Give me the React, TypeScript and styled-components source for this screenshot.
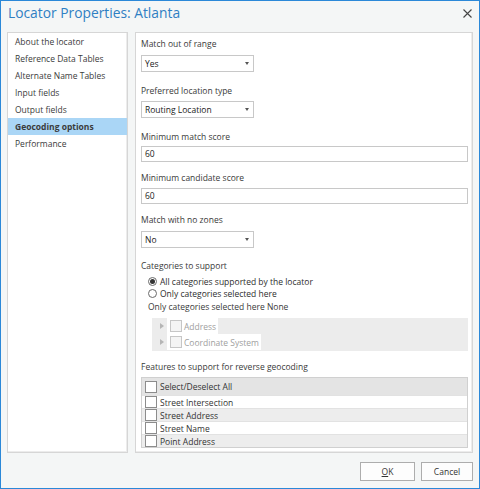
import React from 'react';
import styled, { createGlobalStyle } from 'styled-components';

const GlobalStyle = createGlobalStyle`
  html, body { margin: 0; padding: 0; background: #ffffff; }
  body { font-family: "Open Sans", "Noto Sans", sans-serif; }
  * { box-sizing: border-box; }
`;

const FONT = 8.5;

const Window = styled.div`
  width: 480px;
  height: 489px;
  border: 1px solid #2b88d8;
  background: #f4f6f6;
  display: flex;
  flex-direction: column;
  color: #333;
  font-size: ${FONT}px;
`;

const TitleBar = styled.div`
  height: 31px;
  display: flex;
  align-items: flex-start;
  justify-content: space-between;
  padding: 3px 5px 0 7px;
`;

const Title = styled.div`
  font-size: 13.8px;
  color: #2f7fc3;
  line-height: 18px;
`;

const CloseButton = styled.div`
  width: 14px;
  height: 14px;
  margin-top: 2px;
  display: flex;
  align-items: center;
  justify-content: center;
`;

const Body = styled.div`
  height: 421px;
  display: flex;
  gap: 7px;
  padding: 0 6px;
`;

const Panel = styled.div<{ $width?: number }>`
  ${p => (p.$width ? `width: ${p.$width}px;` : 'flex: 1;')}
  background: #ffffff;
  border: 1px solid #d6d6d6;
  box-shadow: inset -1px -1px 0 #ececec;
`;

const NavList = styled.div`
  padding-top: 0;
`;

const NavItem = styled.div<{ $active?: boolean }>`
  height: 17px;
  line-height: 17px;
  padding-left: 7px;
  color: #3b3b3b;
  font-weight: ${p => (p.$active ? 700 : 400)};
  background: ${p => (p.$active ? '#aad6f6' : 'transparent')};
  white-space: nowrap;
`;

const Content = styled.div`
  padding: 5px 4px 0 5px;
`;

const Field = styled.div<{ $gap: number }>`
  margin-bottom: ${p => p.$gap}px;
`;

const Label = styled.div<{ $gap: number }>`
  height: 12px;
  line-height: 12px;
  margin-bottom: ${p => p.$gap}px;
  color: #3a3a3a;
  white-space: nowrap;
`;

const Select = styled.div`
  width: 113px;
  height: 17px;
  border: 1px solid #c8c8c8;
  background: #fff;
  display: flex;
  align-items: center;
  justify-content: space-between;
  padding: 0 4px 0 3px;
  color: #222;
`;

const Caret = styled.span`
  width: 0;
  height: 0;
  border-left: 2px solid transparent;
  border-right: 2px solid transparent;
  border-top: 3px solid #555;
`;

const TextInput = styled.div`
  height: 16px;
  border: 1px solid #c8c8c8;
  background: #fff;
  line-height: 14px;
  padding-left: 3px;
  color: #222;
`;

const RadioGroup = styled.div`
  padding-left: 7px;
  margin-bottom: 2px;
`;

const RadioRow = styled.div`
  height: 12px;
  display: flex;
  align-items: center;
  gap: 3px;
  white-space: nowrap;
  color: #2e2e2e;
`;

const RadioCircle = styled.span<{ $checked?: boolean }>`
  width: 9px;
  height: 9px;
  border-radius: 50%;
  border: 1px solid #6a6a6a;
  background: #fff;
  display: flex;
  align-items: center;
  justify-content: center;
  &::after {
    content: '';
    width: 5px;
    height: 5px;
    border-radius: 50%;
    background: ${p => (p.$checked ? '#333' : 'transparent')};
  }
`;

const Note = styled.div`
  height: 12px;
  line-height: 12px;
  padding-left: 7px;
  margin-bottom: 5px;
  color: #3a3a3a;
`;

const TreeBox = styled.div`
  margin-left: 11px;
  background: #ececec;
  padding: 0 0 1px 0;
  margin-bottom: 10px;
`;

const TreeRow = styled.div`
  height: 16px;
  display: flex;
  align-items: center;
`;

const Expander = styled.span`
  width: 15px;
  display: flex;
  justify-content: flex-end;
  padding-right: 3px;
  &::before {
    content: '';
    border-top: 3px solid transparent;
    border-bottom: 3px solid transparent;
    border-left: 4px solid #b5b5b5;
  }
`;

const TreeItem = styled.span`
  height: 16px;
  background: #fff;
  display: flex;
  align-items: center;
  gap: 2px;
  padding: 0 2px 0 3px;
  color: #a0a0a0;
`;

const CheckBox = styled.span<{ $muted?: boolean }>`
  width: 12px;
  height: 12px;
  border: 1px solid ${p => (p.$muted ? '#c6c6c6' : '#8c8c8c')};
  background: ${p => (p.$muted ? '#f4f4f4' : '#fff')};
  flex-shrink: 0;
`;

const Grid = styled.div`
  border: 1px solid #d0d0d0;
`;

const GridRow = styled.div<{ $tone: 'head' | 'odd' | 'even' }>`
  height: ${p => (p.$tone === 'head' ? 17 : 13)}px;
  display: flex;
  align-items: center;
  gap: 3px;
  padding-left: 3px;
  color: #333;
  background: ${p =>
    p.$tone === 'head' ? '#e4e4e4' : p.$tone === 'odd' ? '#ffffff' : '#ededed'};
  border-top: ${p => (p.$tone === 'head' ? 'none' : '1px solid #e2e2e2')};
`;

const Footer = styled.div`
  flex: 1;
  display: flex;
  justify-content: flex-end;
  align-items: flex-start;
  gap: 6px;
  padding: 9px 6px 0 0;
`;

const Button = styled.button<{ $width: number }>`
  width: ${p => p.$width}px;
  height: 19px;
  border: 1px solid #adadad;
  background: #fdfdfd;
  font-family: inherit;
  font-size: ${FONT}px;
  color: #333;
  padding: 0;
`;

const navItems = [
  'About the locator',
  'Reference Data Tables',
  'Alternate Name Tables',
  'Input fields',
  'Output fields',
  'Geocoding options',
  'Performance',
];

const features = ['Street Intersection', 'Street Address', 'Street Name', 'Point Address'];

export default function App() {
  return (
    <>
      <GlobalStyle />
      <Window>
        <TitleBar>
          <Title>Locator Properties: Atlanta</Title>
          <CloseButton>
            <svg width="9" height="9" viewBox="0 0 9 9">
              <path d="M0.5 0.5 L8.5 8.5 M8.5 0.5 L0.5 8.5" stroke="#444" strokeWidth="1.1" />
            </svg>
          </CloseButton>
        </TitleBar>
        <Body>
          <Panel $width={121}>
            <NavList>
              {navItems.map(item => (
                <NavItem key={item} $active={item === 'Geocoding options'}>
                  {item}
                </NavItem>
              ))}
            </NavList>
          </Panel>
          <Panel>
            <Content>
              <Field $gap={13}>
                <Label $gap={5}>Match out of range</Label>
                <Select>
                  Yes <Caret />
                </Select>
              </Field>
              <Field $gap={13}>
                <Label $gap={4}>Preferred location type</Label>
                <Select>
                  Routing Location <Caret />
                </Select>
              </Field>
              <Field $gap={10}>
                <Label $gap={3}>Minimum match score</Label>
                <TextInput>60</TextInput>
              </Field>
              <Field $gap={10}>
                <Label $gap={4}>Minimum candidate score</Label>
                <TextInput>60</TextInput>
              </Field>
              <Field $gap={12}>
                <Label $gap={5}>Match with no zones</Label>
                <Select>
                  No <Caret />
                </Select>
              </Field>
              <Label $gap={3}>Categories to support</Label>
              <RadioGroup>
                <RadioRow>
                  <RadioCircle $checked />
                  All categories supported by the locator
                </RadioRow>
                <RadioRow>
                  <RadioCircle />
                  Only categories selected here
                </RadioRow>
              </RadioGroup>
              <Note>Only categories selected here None</Note>
              <TreeBox>
                <TreeRow>
                  <Expander />
                  <TreeItem>
                    <CheckBox $muted />
                    Address
                  </TreeItem>
                </TreeRow>
                <TreeRow>
                  <Expander />
                  <TreeItem>
                    <CheckBox $muted />
                    Coordinate System
                  </TreeItem>
                </TreeRow>
              </TreeBox>
              <Label $gap={4}>Features to support for reverse geocoding</Label>
              <Grid>
                <GridRow $tone="head">
                  <CheckBox />
                  Select/Deselect All
                </GridRow>
                {features.map((f, i) => (
                  <GridRow key={f} $tone={i % 2 === 0 ? 'odd' : 'even'}>
                    <CheckBox />
                    {f}
                  </GridRow>
                ))}
              </Grid>
            </Content>
          </Panel>
        </Body>
        <Footer>
          <Button $width={55}>
            <u>O</u>K
          </Button>
          <Button $width={52}>Cancel</Button>
        </Footer>
      </Window>
    </>
  );
}
